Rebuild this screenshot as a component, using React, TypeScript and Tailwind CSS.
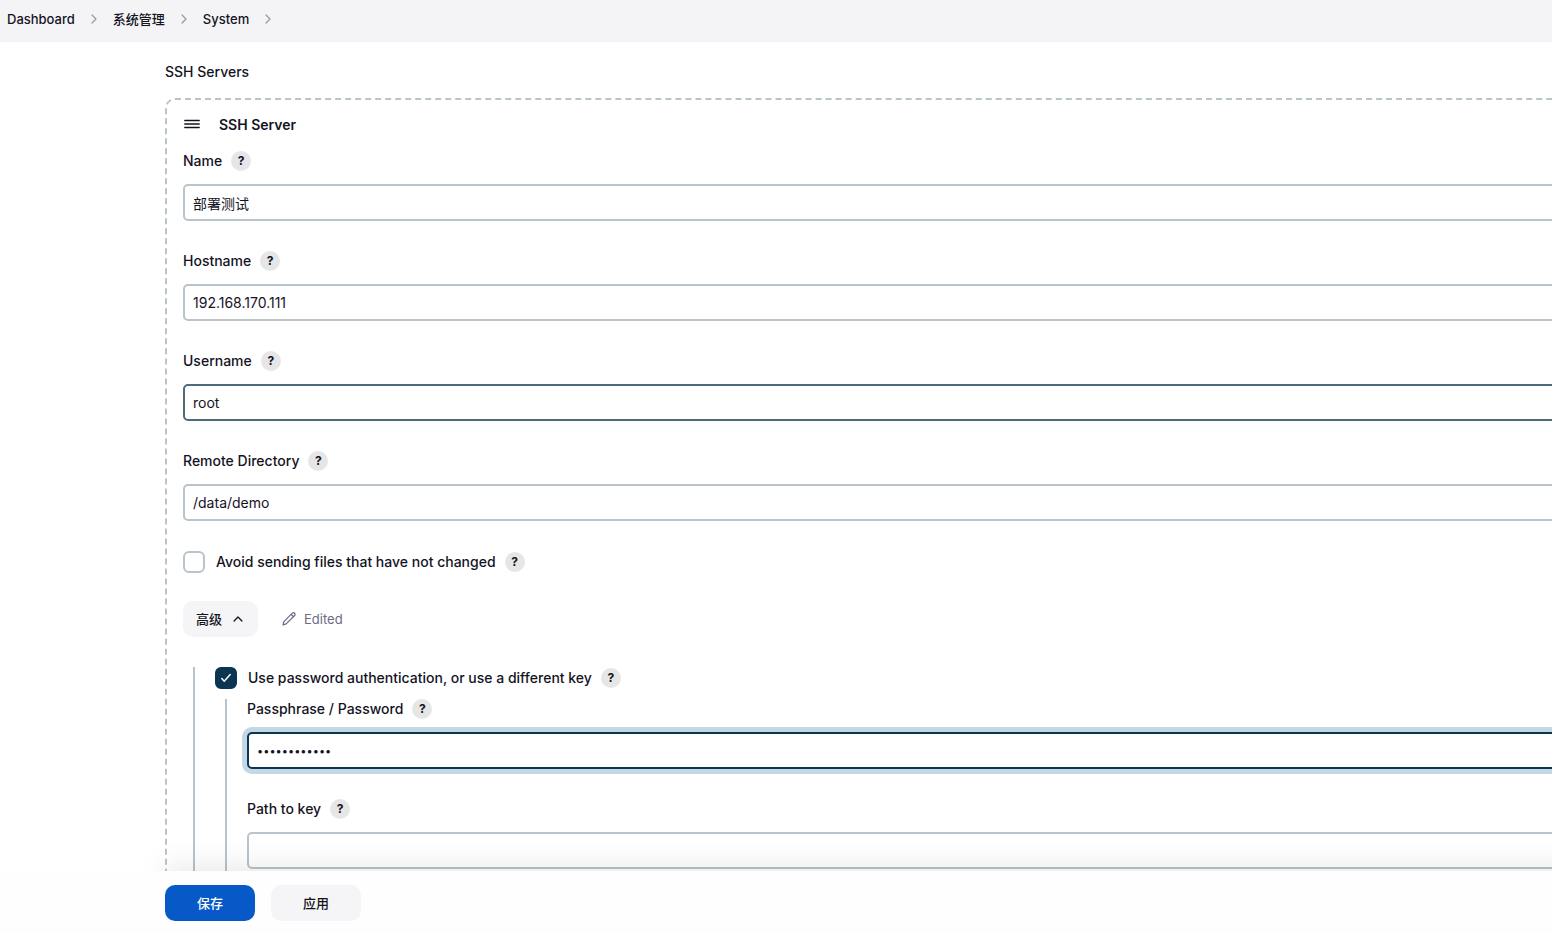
import React, { useState } from 'react';
import { IoChevronForward, IoChevronUp } from 'react-icons/io5';

const BREADCRUMBS = [
    { href: '#dashboard', label: 'Dashboard' },
    { href: '#manage', label: '系统管理' },
    { href: '#system', label: 'System' },
];

const SERVER_FIELDS = [
    { id: 'name', label: 'Name', value: '部署测试', border: 'border-[#b8c4ca]' },
    { id: 'hostname', label: 'Hostname', value: '192.168.170.111', border: 'border-[#b8c4ca]' },
    { id: 'username', label: 'Username', value: 'root', border: 'border-[#4f6b7b]' },
    { id: 'remote-directory', label: 'Remote Directory', value: '/data/demo', border: 'border-[#b8c4ca]' },
];

function HelpButton({ label }: { label: string }) {
    return (
        <button
            type="button"
            aria-label={`Help for ${label}`}
            className="flex h-5 w-5 shrink-0 items-center justify-center rounded-full bg-[#e6e6e6] text-xs font-bold"
        >
            ?
        </button>
    );
}

function PencilIcon() {
    return (
        <svg
            viewBox="0 0 14 14"
            className="h-[14px] w-[14px]"
            fill="none"
            stroke="currentColor"
            strokeWidth="1.2"
            strokeLinecap="round"
            strokeLinejoin="round"
        >
            <path d="M1 13 1.9 9.6 10.3 1.2a1.55 1.55 0 0 1 2.3 0 1.55 1.55 0 0 1 0 2.3L4.2 11.9Z" />
            <path d="M9.1 2.4 11.4 4.7" />
        </svg>
    );
}

interface FieldProps {
    id: string;
    label: string;
    value: string;
    type?: string;
    border?: string;
}

function Field({ id, label, value, type = 'text', border = 'border-[#b8c4ca]' }: FieldProps) {
    const [text, setText] = useState(value);

    return (
        <div className="pb-[30px]">
            <div className="mb-[13px] flex h-5 items-center gap-[9px]">
                <label htmlFor={id} className="font-medium">{label}</label>
                <HelpButton label={label} />
            </div>
            <input
                id={id}
                type={type}
                value={text}
                onChange={(e) => setText(e.target.value)}
                className={`block h-[37px] w-full rounded-[5px] border-2 bg-white px-2 outline-none ${border}
          ${type === 'password' ? 'text-[11px]' : 'text-sm'}`}
            />
        </div>
    );
}

function Checkbox({ id, label, checked }: { id: string; label: string; checked: boolean }) {
    const [on, setOn] = useState(checked);

    return (
        <div className="flex h-[22px] items-center gap-[9px]">
            <div className="flex items-center gap-[11px]">
                <span className="grid">
                    <input
                        id={id}
                        type="checkbox"
                        checked={on}
                        onChange={(e) => setOn(e.target.checked)}
                        className="peer col-start-1 row-start-1 h-[22px] w-[22px] appearance-none rounded-md border-2
              border-[#b8c4ca] bg-white checked:border-[#0b3550] checked:bg-[#0b3550]"
                    />
                    <svg
                        viewBox="0 0 22 22"
                        className="pointer-events-none invisible col-start-1 row-start-1 h-[22px] w-[22px]
              peer-checked:visible"
                        fill="none"
                        stroke="white"
                        strokeWidth="1.5"
                        strokeLinecap="round"
                        strokeLinejoin="round"
                    >
                        <path d="M6.8 11.6 9.2 14.2 15.2 7.6" />
                    </svg>
                </span>
                <label htmlFor={id} className="font-medium">{label}</label>
            </div>
            <HelpButton label={label} />
        </div>
    );
}

export default function App() {
    return (
        <div
            className="flex h-screen flex-col overflow-hidden bg-white text-sm text-[#14141f]
        font-['Inter','Noto_Sans_CJK_SC',sans-serif]"
        >
            {/* Breadcrumbs */}
            <header className="h-[42px] shrink-0 bg-[#f4f4f7] pb-1">
                <nav aria-label="Breadcrumb" className="flex h-full items-center pl-[7px] text-[13px] font-medium">
                    {BREADCRUMBS.map(({ href, label }) => (
                        <React.Fragment key={href}>
                            <a href={href}>{label}</a>
                            <IoChevronForward className="mx-3 h-[14px] w-[14px] text-[#9a9aaa]" />
                        </React.Fragment>
                    ))}
                </nav>
            </header>

            {/* Form */}
            <main className="relative min-h-0 flex-1 overflow-hidden pl-[165px]">
                <form className="-mr-8 pt-5">
                    <h2 className="mb-4 h-5 font-medium leading-5">SSH Servers</h2>

                    <section className="rounded-[10px] border-2 border-dashed border-[#b8c4ca] px-4 pt-[15px] pb-8">
                        <div className="mb-4 flex h-5 items-center gap-[18px]">
                            <svg viewBox="0 0 18 18" className="h-[18px] w-[18px]" stroke="currentColor" strokeWidth="1.4" strokeLinecap="round">
                                <path d="M1.8 4.5h14.4M1.8 8h14.4M1.8 11.5h14.4" />
                            </svg>
                            <h3 className="font-semibold">SSH Server</h3>
                        </div>

                        {SERVER_FIELDS.map((field) => (
                            <Field key={field.id} {...field} />
                        ))}

                        <Checkbox id="avoid-same" label="Avoid sending files that have not changed" checked={false} />

                        <div className="mt-7 mb-[30px] flex items-center gap-6">
                            <button
                                type="button"
                                className="flex h-9 w-[75px] items-center justify-center gap-[9px] rounded-[10px] bg-[#f5f5f8]
                  text-[13px] font-medium"
                            >
                                高级
                                <IoChevronUp className="h-[14px] w-[14px]" />
                            </button>
                            <span className="flex items-center gap-2 text-[13px] text-[#6d6b84]">
                                <PencilIcon />
                                Edited
                            </span>
                        </div>

                        <div className="ml-[10px] border-l-2 border-[#b8c4ca] pl-5">
                            <Checkbox
                                id="use-password"
                                label="Use password authentication, or use a different key"
                                checked
                            />
                            <div className="mt-[10px] ml-[10px] border-l-2 border-[#b8c4ca] pl-5">
                                <Field
                                    id="passphrase"
                                    label="Passphrase / Password"
                                    value="deploydemo12"
                                    type="password"
                                    border="border-[#0b3550] ring-[5px] ring-[#c3d7e5]"
                                />
                                <Field id="key-path" label="Path to key" value="" />
                            </div>
                        </div>
                    </section>
                </form>

                {/* Shadow cast by the bottom bar */}
                <div className="pointer-events-none absolute inset-x-0 bottom-0 h-10 overflow-hidden">
                    <div className="mt-10 -mr-8 ml-[165px] h-16 shadow-[0_-3px_30px_rgba(0,0,0,0.1)]" />
                </div>
            </main>

            {/* Bottom bar */}
            <footer className="flex shrink-0 gap-4 bg-[#fefefe] pt-[14px] pb-3 pl-[165px] text-[13px] font-medium">
                <button type="submit" className="h-9 w-[90px] rounded-[10px] bg-[#0759c7] text-white">保存</button>
                <button type="button" className="h-9 w-[90px] rounded-[10px] bg-[#f5f5f8]">应用</button>
            </footer>
        </div>
    );
}
